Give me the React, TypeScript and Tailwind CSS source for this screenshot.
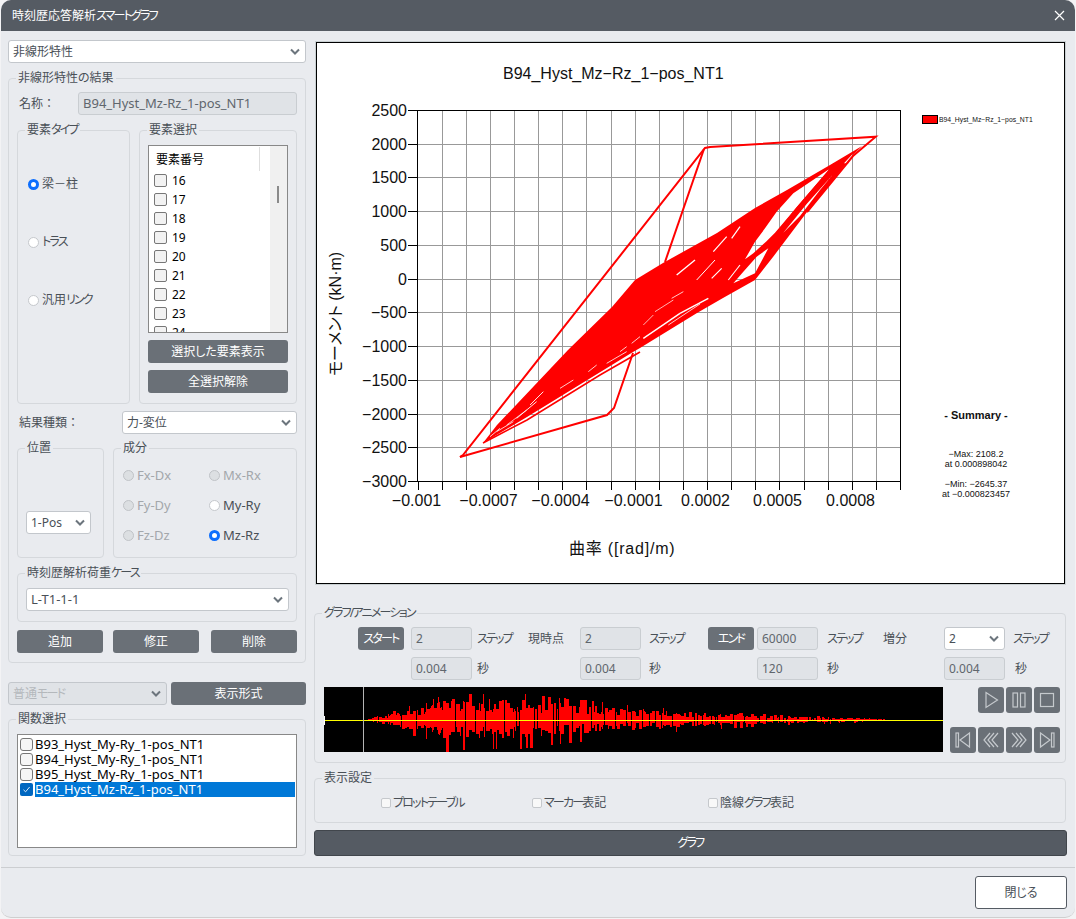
import React from "react";

type P = [number, number];
const z7 = (a: P[]) => a.map(([x, y]) => [640 + x / 3, 100 + y / 3] as P);
const z8 = (a: P[]) => a.map(([x, y]) => [340 + x / 3, 330 + y / 3] as P);
const z11 = (a: P[]) => a.map(([x, y]) => [600 + x / 3, 200 + y / 3] as P);
const pts = (a: P[]) => a.map((p) => p.join(",")).join(" ");
const sub = (a: P[]) => "M" + a.map((p) => p.join(" ")).join(" L") + " Z ";

const K = ({ children }: { children: React.ReactNode }) => <span className="tracking-[-1.8px]">{children}</span>;

const Chev = ({ c = "#6c757d" }: { c?: string }) => (
  <svg width="10" height="7" viewBox="0 0 10 7" className="shrink-0">
    <path d="M1 1.5 L5 5.5 L9 1.5" fill="none" stroke={c} strokeWidth="2" />
  </svg>
);

const Sel = ({ text, cls, disabled }: { text: React.ReactNode; cls: string; disabled?: boolean }) => (
  <div
    className={`h-[23px] flex items-center justify-between pl-[4px] pr-[5px] border border-[#c3c7cc] rounded-[3px] text-[12px] ${cls} ${
      disabled ? "bg-[#e0e3e7] text-[#b4b8bc]" : "bg-white text-[#495057]"
    }`}
  >
    <span>{text}</span>
    <Chev />
  </div>
);

const Field = ({ text, cls }: { text: string; cls: string }) => (
  <div className={`h-[23px] flex items-center pl-[4px] bg-[#e0e3e7] border border-[#c9cdd1] rounded-[3px] text-[#5f666d] ${cls}`}>
    {text}
  </div>
);

const Btn = ({ text, cls }: { text: React.ReactNode; cls: string }) => (
  <div className={`h-[23px] flex items-center justify-center bg-[#6a7077] rounded-[3px] text-[12px] text-white ${cls}`}>{text}</div>
);

const Box = ({ title, cls, children, lcls }: { title: React.ReactNode; cls: string; children?: React.ReactNode; lcls?: string }) => (
  <fieldset className={`border border-[#d5d8dc] rounded-[4px] min-w-0 ${cls}`}>
    <legend className={`h-[14px] leading-[14px] px-[2px] text-[12px] text-[#495057] ${lcls ?? "ml-[7px]"}`}>{title}</legend>
    {children}
  </fieldset>
);

const Radio = ({ label, state, size = "text-[13px]" }: { label: React.ReactNode; state: "on" | "off" | "dis"; size?: string }) => (
  <div className={`flex items-center gap-[3px] leading-[18px] ${size} ${state === "dis" ? "text-[#a3a7ab]" : "text-[#495057]"}`}>
    <span
      className={`w-[11px] h-[11px] rounded-full shrink-0 ${
        state === "on"
          ? "bg-white border-[3px] border-[#0d6efd]"
          : state === "off"
          ? "bg-white border border-[#c5c8cc]"
          : "bg-[#dcdfe2] border border-[#c0c3c7]"
      }`}
    />
    <span>{label}</span>
  </div>
);

const IconBtn = ({ children }: { children: React.ReactNode }) => (
  <div className="w-[26px] h-[26px] rounded-[3px] bg-[#6a7077] flex items-center justify-center">
    <svg width="20" height="20" viewBox="0 0 20 20" fill="none" stroke="#c5c9cd" strokeWidth="1.2">
      {children}
    </svg>
  </div>
);

function Wave() {
  let s = 12345;
  const r = () => {
    s = (s * 16807) % 2147483647;
    return s / 2147483647;
  };
  const env: P[] = [
    [368, 1], [385, 6], [400, 12], [425, 17], [440, 24], [447, 30], [470, 26], [520, 26], [580, 20], [640, 14],
    [700, 9], [780, 5], [850, 2.5], [890, 0.6],
  ];
  const e = (x: number) => {
    for (let i = 1; i < env.length; i++) {
      if (x <= env[i][0]) {
        const t = (x - env[i - 1][0]) / (env[i][0] - env[i - 1][0]);
        return env[i - 1][1] + t * (env[i][1] - env[i - 1][1]);
      }
    }
    return 0;
  };
  let d = "";
  let x = 368;
  while (x < 890) {
    const w = 1 + Math.floor(r() * 3);
    const v = e(x);
    const up = Math.round(Math.min(30, v * (r() > 0.88 ? 1 : 0.3 + r() * 0.5)));
    const dn = Math.round(Math.min(32, v * (r() > 0.92 ? 1.1 : 0.2 + r() * 0.5)));
    d += `M${x} ${720 - up} H${x + w} V${720 + dn} H${x} Z `;
    x += w + (r() > 0.8 ? 1 : 0);
  }
  return (
    <svg viewBox="324 687 619 65" className="w-[619px] h-[65px] bg-black block">
      <path d={d} fill="#ff0000" shapeRendering="crispEdges" />
      <line x1="324" x2="943" y1="720.5" y2="720.5" stroke="#ffff00" strokeWidth="1" />
      <line x1="363.5" x2="363.5" y1="687" y2="752" stroke="#b4b4b4" strokeWidth="1" />
      <line x1="324.5" x2="324.5" y1="716" y2="725" stroke="#ffffff" strokeWidth="1" />
    </svg>
  );
}

function Chart() {
  const xs = Array.from({ length: 21 }, (_, i) => Math.round(417.5 + i * 24.13) + 0.5);
  const ys = Array.from({ length: 12 }, (_, i) => Math.round(110 + i * 33.73) + 0.5);
  const yl = ["2500", "2000", "1500", "1000", "500", "0", "−500", "−1000", "−1500", "−2000", "−2500", "−3000"];
  const xl: [number, string][] = [
    [0, "−0.001"], [3, "−0.0007"], [6, "−0.0004"], [9, "−0.0001"], [12, "0.0002"], [15, "0.0005"], [18, "0.0008"],
  ];
  const body: P[] = [
    [483, 443], [497, 425], [568, 350], [612, 307], [635, 280], [663, 263], [717, 233], [755, 208], [787, 190],
    [830, 165], [862, 146], [853, 155], [807, 212], [773, 257], [755, 280], [723, 298], [697, 313], [640, 348],
    [633, 352], [527, 417],
  ];
  const holes: P[][] = [
    z7([[460, 280], [568, 207], [470, 322], [405, 398], [378, 425], [340, 460], [315, 478], [345, 425], [375, 385], [410, 335]]),
    z7([[580, 222], [500, 312], [430, 398], [480, 348], [540, 270]]),
    z7([[385, 445], [345, 520], [280, 550], [310, 515], [350, 470]]),
    z7([[612, 190], [640, 160], [625, 190]]),
  ];
  const lobes: P[][] = [
    z7([[578, 200], [470, 325], [412, 398], [350, 465]]),
  ];
  const slits: [P, P, number][] = [
    [[285, 180], [230, 225], 1.4], [[345, 180], [290, 240], 1], [[380, 110], [340, 155], 1.2], [[420, 80], [395, 115], 1.2],
    [[250, 275], [215, 295], 0.8], [[220, 300], [165, 335], 0.7], [[160, 345], [130, 375], 0.7],
    [[120, 410], [95, 430], 0.8], [[80, 440], [60, 455], 0.8], [[325, 295], [240, 340], 1.5], [[240, 340], [130, 415], 1.4],
    [[300, 312], [205, 375], 0.8], [[365, 205], [335, 235], 1.2], [[420, 195], [385, 240], 1.1],
  ];
  const slits8: [P, P, number][] = [
    [[860, 65], [800, 100], 0.8], [[770, 105], [745, 125], 0.8], [[700, 150], [660, 175], 0.8], [[610, 185], [570, 225], 0.9],
    [[590, 215], [530, 265], 0.9], [[560, 240], [500, 285], 0.7], [[520, 275], [470, 305], 0.8], [[480, 295], [450, 320], 0.8],
  ];
  return (
    <svg viewBox="317 43 747 540" className="w-[747px] h-[540px] block bg-white font-['Liberation_Sans','Noto_Sans_CJK_JP',sans-serif]">
      <g stroke="#999999" strokeWidth="1" shapeRendering="crispEdges">
        {xs.slice(1, -1).map((x) => <line key={x} x1={x} x2={x} y1={110} y2={481} />)}
        {ys.slice(1, -1).map((y) => <line key={y} x1={417} x2={900} y1={y} y2={y} />)}
      </g>
      <g stroke="#000" strokeWidth="1" shapeRendering="crispEdges">
        <rect x="417.5" y="110.5" width="483" height="371" fill="none" />
        {xs.map((x) => <line key={x} x1={x} x2={x} y1={481} y2={490} />)}
        {ys.map((y) => <line key={y} x1={408} x2={417} y1={y} y2={y} />)}
      </g>
      <path d={sub(body) + holes.map(sub).join("")} fill="#ff0000" fillRule="evenodd" />
      {lobes.map((l, i) => (
        <polyline key={i} points={pts(l)} fill="none" stroke="#ff0000" strokeWidth={1.5} />
      ))}
      {slits.map(([a, b, w], i) => {
        const [p, q] = z11([a, b]);
        return <line key={i} x1={p[0]} y1={p[1]} x2={q[0]} y2={q[1]} stroke="#fff" strokeWidth={w} />;
      })}
      {slits8.map(([a, b, w], i) => {
        const [p, q] = z8([a, b]);
        return <line key={i} x1={p[0]} y1={p[1]} x2={q[0]} y2={q[1]} stroke="#fff" strokeWidth={w} />;
      })}
      <polyline
        points="460,457 463,455 705,148 710,147 875.7,136.7 853,156 807,212"
        fill="none" stroke="#ff0000" strokeWidth="2"
      />
      <polyline points="704,149 665,262" fill="none" stroke="#ff0000" strokeWidth="2" />
      <polyline points="460,457 607,415 614,408 633,353" fill="none" stroke="#ff0000" strokeWidth="2" />
      <polyline points="483,443 527,420 600,375 640,352" fill="none" stroke="#ff0000" strokeWidth="1.6" />
      <g fontSize="16" fill="#111">
        <text x="503" y="78.5" fontSize="16">B94_Hyst_Mz−Rz_1−pos_NT1</text>
        {ys.map((y, i) => <text key={y} x="407" y={y + 5.5} textAnchor="end">{yl[i]}</text>)}
        {xl.map(([i, t]) => <text key={t} x={xs[i] - 2} y={505.5} textAnchor="middle">{t}</text>)}
        <text x="569" y="554" letterSpacing="0.8">曲率 ([rad]/m)</text>
        <text transform="translate(341 376) rotate(-90)" x="0" y="0">モーメント (kN·m)</text>
      </g>
      <rect x="922.5" y="115.5" width="15" height="8" fill="#ff0000" stroke="#000" strokeWidth="1" />
      <text x="939" y="122" fontSize="6.8" fill="#111">B94_Hyst_Mz−Rz_1−pos_NT1</text>
      <text x="976" y="419" fontSize="11" fontWeight="700" textAnchor="middle" fill="#111">- Summary -</text>
      <g fontSize="9" fill="#111" textAnchor="middle">
        <text x="976" y="457">−Max: 2108.2</text>
        <text x="976" y="467">at 0.000898042</text>
        <text x="976" y="487">−Min: −2645.37</text>
        <text x="976" y="497">at −0.000823457</text>
      </g>
    </svg>
  );
}

const Cb = ({ cls }: { cls?: string }) => (
  <span className={`w-[13px] h-[13px] rounded-[2px] border border-[#777] bg-[#f2f2f2] shrink-0 ${cls ?? ""}`} />
);

const C = ({ w, cls, children }: { w: string; cls?: string; children?: React.ReactNode }) => (
  <div className={`shrink-0 text-[12px] text-[#495057] ${w} ${cls ?? ""}`}>{children}</div>
);

const Mini = ({ cls }: { cls?: string }) => (
  <span className={`w-[10px] h-[10px] bg-[#f8f8f8] border border-[#c5c8cc] rounded-[2px] shrink-0 ${cls ?? ""}`} />
);

export default function App() {
  const funcs = ["B93_Hyst_My-Ry_1-pos_NT1", "B94_Hyst_My-Ry_1-pos_NT1", "B95_Hyst_My-Ry_1-pos_NT1"];
  return (
    <div className="w-[1076px] h-[919px] bg-[#f3f3f5] overflow-hidden font-['Noto_Sans','Noto_Sans_CJK_JP',sans-serif] [font-feature-settings:'palt']">
      <div className="w-[1074px] h-[918px] ml-[1px] bg-[#e9ebef] rounded-[10px] border-b border-[#cfcfcf] overflow-hidden flex flex-col">
        <div className="h-[31px] bg-[#555b63] flex items-center justify-between pl-[11px] pr-[10px] shrink-0">
          <span className="text-[12px] text-white">時刻歴応答解析<K>スマートグラフ</K></span>
          <svg width="11" height="11" viewBox="0 0 11 11">
            <path d="M1 1 L10 10 M10 1 L1 10" stroke="#fff" strokeWidth="1.2" />
          </svg>
        </div>
        <div className="flex h-[837px] shrink-0 border-b border-[#ccced1] pl-[7px]">
          {/* left */}
          <div className="w-[298px] shrink-0">
            <Sel text="非線形特性" cls="mt-[9px] w-[298px]" />
            <Box title="非線形特性の結果" cls="mt-[8px] h-[592px] px-[8px]" lcls="-ml-[1px]">
              <div className="mt-[7px] flex items-center">
                <span className="w-[61px] pl-[2px] text-[12px] text-[#495057] [font-feature-settings:normal]">名称：</span>
                <Field text="B94_Hyst_Mz-Rz_1-pos_NT1" cls="w-[219px] text-[13px]" />
              </div>
              <div className="mt-[8px] flex gap-[9px]">
                <Box title={<>要素<K>タイプ</K></>} cls="w-[113px] h-[281px]">
                  <div className="pl-[10px] pt-[38px] flex flex-col gap-[40px]">
                    <Radio label="梁－柱" state="on" size="text-[12px]" />
                    <Radio label={<K>トラス</K>} state="off" size="text-[12px]" />
                    <Radio label={<>汎用<K>リンク</K></>} state="off" size="text-[12px]" />
                  </div>
                </Box>
                <Box title="要素選択" cls="w-[158px] h-[281px]">
                  <div className="ml-[8px] mt-[8px] w-[140px] h-[188px] border border-[#888] bg-white relative overflow-hidden">
                    <div className="h-[25px] flex items-center pl-[7px] pt-[2px] text-[12px] text-black">要素番号</div>
                    <div className="absolute left-[110px] top-[1px] h-[24px] w-px bg-[#dedede]" />
                    <div className="absolute right-0 top-0 bottom-0 w-[17px] bg-[#f0f0f0]" />
                    <div className="absolute left-[128px] top-[40px] w-[2px] h-[17px] bg-[#8a8a8a]" />
                    <div className="pl-[5px]">
                      {[16, 17, 18, 19, 20, 21, 22, 23, 24].map((n) => (
                        <div key={n} className="h-[19px] flex items-center gap-[5px] text-[12px] text-black">
                          <Cb />
                          <span>{n}</span>
                        </div>
                      ))}
                    </div>
                  </div>
                  <Btn text="選択した要素表示" cls="ml-[8px] mt-[7px] w-[140px]" />
                  <Btn text="全選択解除" cls="ml-[8px] mt-[7px] w-[140px]" />
                </Box>
              </div>
              <div className="mt-[7px] flex items-center">
                <span className="w-[105px] pl-[2px] text-[12px] text-[#495057] [font-feature-settings:normal]">結果種類：</span>
                <Sel text="力-変位" cls="w-[175px]" />
              </div>
              <div className="mt-[7px] flex gap-[9px]">
                <Box title="位置" cls="w-[87px] h-[117px]">
                  <Sel text="1-Pos" cls="ml-[8px] mt-[56px] w-[65px]" />
                </Box>
                <Box title="成分" cls="w-[184px] h-[117px]">
                  <div className="grid grid-cols-[86px_86px] pl-[9px] pt-[11px] gap-y-[12px]">
                    <Radio label="Fx-Dx" state="dis" />
                    <Radio label="Mx-Rx" state="dis" />
                    <Radio label="Fy-Dy" state="dis" />
                    <Radio label="My-Ry" state="off" />
                    <Radio label="Fz-Dz" state="dis" />
                    <Radio label="Mz-Rz" state="on" />
                  </div>
                </Box>
              </div>
              <Box title={<>時刻歴解析荷重<K>ケース</K></>} cls="mt-[8px] h-[56px]">
                <div className="ml-[8px] mt-[8px] w-[263px] h-[23px] flex items-center justify-between pl-[4px] pr-[5px] border border-[#c3c7cc] rounded-[3px] bg-white text-[13px] text-[#495057]">
                  <span>L-T1-1-1</span>
                  <Chev />
                </div>
              </Box>
              <div className="mt-[8px] flex">
                <Btn text="追加" cls="w-[86px]" />
                <Btn text="修正" cls="w-[86px] ml-[10px]" />
                <Btn text="削除" cls="w-[86px] ml-[12px]" />
              </div>
            </Box>
            <div className="mt-[19px] flex gap-[4px]">
              <Sel text={<>普通<K>モード</K></>} cls="w-[159px]" disabled />
              <Btn text="表示形式" cls="w-[135px]" />
            </div>
            <Box title="関数選択" cls="mt-[7px] h-[144px] w-[298px]">
              <div className="ml-[8px] mt-[8px] w-[280px] h-[114px] border border-[#888] bg-white pt-[2px] pl-[2px] pr-[1px]">
                {funcs.map((f) => (
                  <div key={f} className="h-[15px] flex items-center text-[13px] leading-[15px] text-black">
                    <Cb cls="rounded-[3px] bg-[#f6f6f6]" />
                    <span className="ml-[2px]">{f}</span>
                  </div>
                ))}
                <div className="h-[15px] flex items-center text-[13px] leading-[15px]">
                  <span className="w-[13px] h-[13px] rounded-[2px] bg-[#0067c0] shrink-0 flex items-center justify-center">
                    <svg width="9" height="9" viewBox="0 0 9 9">
                      <path d="M1.5 4.8 L3.6 6.8 L7.6 2" fill="none" stroke="#d9e8f7" strokeWidth="1" />
                    </svg>
                  </span>
                  <span className="ml-[2px] flex-1 h-[15px] bg-[#0078d7] text-white">B94_Hyst_Mz-Rz_1-pos_NT1</span>
                </div>
              </div>
            </Box>
          </div>
          {/* right */}
          <div className="w-[753px] ml-[8px] shrink-0">
            <div className="mt-[10px] w-[751px] h-[544px] border border-[#c9d0d2] ml-[1px]">
              <div className="w-full h-full border border-black overflow-hidden">
                <Chart />
              </div>
            </div>
            <Box title={<K>グラフ/アニメーション</K>} cls="mt-[21px] h-[157px] w-[752px]">
              <div className="mt-[7px] flex items-center h-[23px]">
                <C w="w-[43px]" />
                <Btn text={<K>スタート</K>} cls="w-[46px] shrink-0" />
                <Field text="2" cls="w-[61px] ml-[7px] shrink-0 text-[12px]" />
                <C w="w-[56px] pl-[5px]"><K>ステップ</K></C>
                <C w="w-[52px]">現時点</C>
                <Field text="2" cls="w-[61px] shrink-0 text-[12px]" />
                <C w="w-[67px] pl-[8px]"><K>ステップ</K></C>
                <Btn text={<K>エンド</K>} cls="w-[46px] shrink-0" />
                <Field text="60000" cls="w-[61px] ml-[3px] shrink-0 text-[12px]" />
                <C w="w-[65px] pl-[9px]"><K>ステップ</K></C>
                <C w="w-[61px]">増分</C>
                <Sel text="2" cls="w-[61px] shrink-0" />
                <C w="pl-[8px]"><K>ステップ</K></C>
              </div>
              <div className="mt-[7px] flex items-center h-[23px]">
                <C w="w-[96px]" />
                <Field text="0.004" cls="w-[61px] shrink-0 text-[12px]" />
                <C w="w-[108px] pl-[5px]">秒</C>
                <Field text="0.004" cls="w-[61px] shrink-0 text-[12px]" />
                <C w="w-[116px] pl-[8px]">秒</C>
                <Field text="120" cls="w-[61px] shrink-0 text-[12px]" />
                <C w="w-[126px] pl-[9px]">秒</C>
                <Field text="0.004" cls="w-[61px] shrink-0 text-[12px]" />
                <C w="pl-[10px]">秒</C>
              </div>
              <div className="mt-[7px] flex ml-[9px]">
                <Wave />
                <div className="ml-[7px] w-[110px] flex flex-col items-end gap-[14px]">
                  <div className="flex gap-[2px]">
                    <IconBtn><path d="M5 2.5 L16.5 10 L5 17.5 Z" /></IconBtn>
                    <IconBtn>
                      <rect x="4" y="3" width="4.5" height="14" />
                      <rect x="11.5" y="3" width="4.5" height="14" />
                    </IconBtn>
                    <IconBtn><rect x="3.5" y="3.5" width="13" height="13" /></IconBtn>
                  </div>
                  <div className="flex gap-[2px]">
                    <IconBtn>
                      <rect x="3" y="3" width="2.5" height="14" />
                      <path d="M16.5 3 L7 10 L16.5 17 Z" />
                    </IconBtn>
                    <IconBtn>
                      <path d="M9 3 L3 10 L9 17 M13 3 L7 10 L13 17 M17 3 L11 10 L17 17" />
                    </IconBtn>
                    <IconBtn>
                      <path d="M3 3 L9 10 L3 17 M7 3 L13 10 L7 17 M11 3 L17 10 L11 17" />
                    </IconBtn>
                    <IconBtn>
                      <rect x="14.5" y="3" width="2.5" height="14" />
                      <path d="M3.5 3 L13 10 L3.5 17 Z" />
                    </IconBtn>
                  </div>
                </div>
              </div>
            </Box>
            <Box title="表示設定" cls="mt-[8px] h-[52px] w-[752px]">
              <div className="mt-[9px] flex items-center text-[12px] text-[#495057]">
                <Mini cls="ml-[66px]" />
                <span className="ml-[2px] w-[139px]"><K>プロットテーブル</K></span>
                <Mini />
                <span className="ml-[2px] w-[164px]"><K>マーカー</K>表記</span>
                <Mini />
                <span className="ml-[2px]">陰線<K>グラフ</K>表記</span>
              </div>
            </Box>
            <div className="mt-[7px] w-[753px] h-[26px] bg-[#555b63] border border-[#41464c] rounded-[3px] flex items-center justify-center text-[12px] text-white">
              <K>グラフ</K>
            </div>
          </div>
        </div>
        <div className="flex justify-end pr-[7px] pt-[8px]">
          <div className="w-[92px] h-[33px] bg-white border border-[#555b63] rounded-[3px] mr-[1px] flex items-center justify-center text-[12px] text-[#495057]">
            閉じる
          </div>
        </div>
      </div>
    </div>
  );
}
